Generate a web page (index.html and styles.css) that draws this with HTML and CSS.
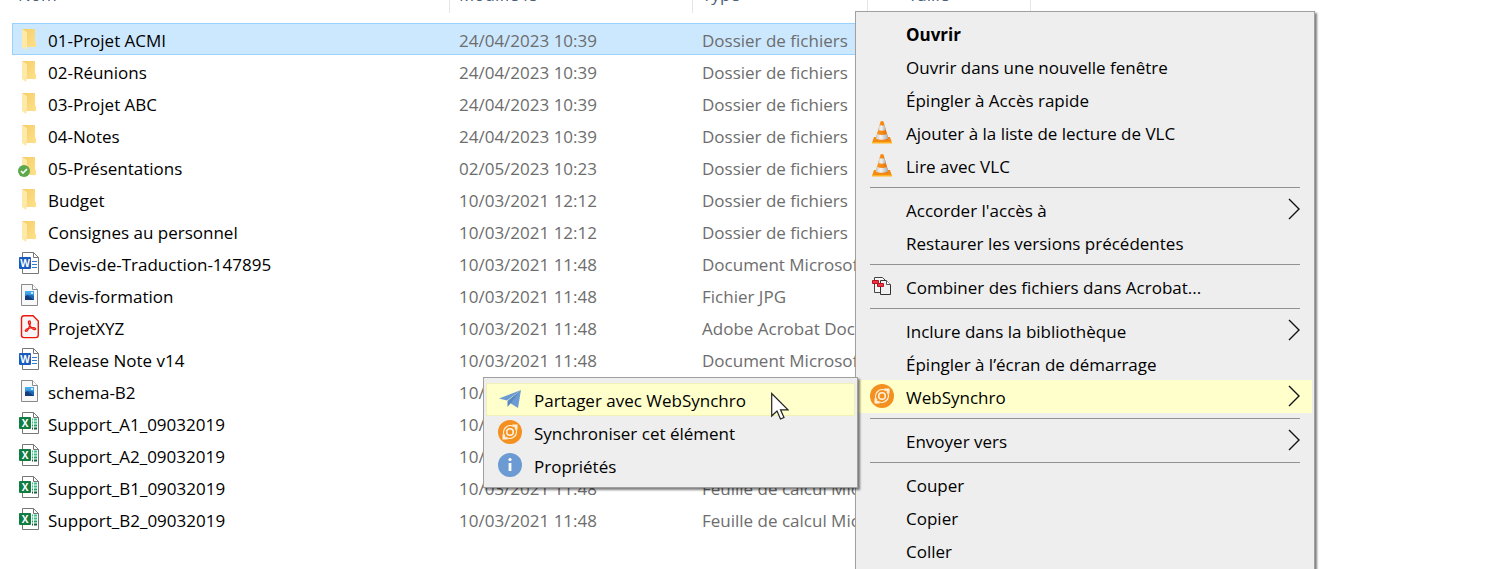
FILE: index.html
```
<!DOCTYPE html>
<html lang="fr">
<head>
  <meta charset="UTF-8" />
  <meta name="viewport" content="width=device-width, initial-scale=1.0"/>
  <title>WebSynchro - Menu contextuel</title>
  <link rel="stylesheet" href="styles.css">
</head>
<body>
  <!-- Icons -->
  <svg class="sprite" aria-hidden="true">
    <defs>
      <linearGradient id="gold" x1="0" y1="0" x2="1" y2="1">
        <stop offset="0" stop-color="#f3cd68"/>
        <stop offset="1" stop-color="#ffe08a"/>
      </linearGradient>
      <linearGradient id="sky" x1="0" y1="0" x2="0" y2="1">
        <stop offset="0" stop-color="#4db2f5"/>
        <stop offset="1" stop-color="#1668bd"/>
      </linearGradient>
      <linearGradient id="cone" x1="0" y1="0" x2="1" y2="0">
        <stop offset="0" stop-color="#f79a2c"/>
        <stop offset="0.5" stop-color="#f78a14"/>
        <stop offset="1" stop-color="#d9690a"/>
      </linearGradient>
      <linearGradient id="band" x1="0" y1="0" x2="1" y2="0">
        <stop offset="0" stop-color="#c9c9c9"/>
        <stop offset="0.4" stop-color="#f4f4f4"/>
        <stop offset="1" stop-color="#a9acb0"/>
      </linearGradient>
    </defs>
    <symbol id="folder" viewBox="0 0 24 24">
      <path d="M4 2h13v12l1 2v4H8z" fill="url(#gold)"/>
      <path d="M4 2l5 3v15l-1 3-4-3z" fill="#ffe9a9"/>
    </symbol>
    <symbol id="folder-ok" viewBox="0 0 24 24">
      <use href="#folder"/>
      <circle cx="6" cy="16" r="6" fill="#5da74c"/>
      <path d="M3 16l2 2 4-4" fill="none" stroke="#fff" stroke-width="1.6"/>
    </symbol>
    <symbol id="word" viewBox="0 0 24 24">
      <path d="M4.500 1.500h11l5 5v16h-16z" fill="#fff" stroke="#777"/>
      <path d="M15.500 1.500v5h5" fill="none" stroke="#777"/>
      <path d="M14 10.500h5M14 13.500h5M14 16.500h5" stroke="#2f7fd6"/>
      <rect x="1" y="6" width="12" height="12" rx="1" fill="#185abd"/>
      <text x="7" y="16" class="badge-letter">W</text>
    </symbol>
    <symbol id="excel" viewBox="0 0 24 24">
      <path d="M4.500 1.500h11l5 5v16h-16z" fill="#fff" stroke="#777"/>
      <path d="M15.500 1.500v5h5" fill="none" stroke="#777"/>
      <path d="M14 8.500h1M16 8.500h3M14 11.500h1M16 11.500h3" stroke="#33c481" stroke-width="2"/>
      <path d="M14 14.500h1M16 14.500h3" stroke="#21a366" stroke-width="2"/>
      <path d="M14 17.500h1M16 17.500h3" stroke="#185c37" stroke-width="2"/>
      <rect x="1" y="6" width="12" height="12" rx="1" fill="#107c41"/>
      <text x="7" y="16" class="badge-letter">X</text>
    </symbol>
    <symbol id="image" viewBox="0 0 24 24">
      <path d="M3.500 1.500h11l5 5v16h-16z" fill="#f8f8f8" stroke="#8a8a8a"/>
      <path d="M14.500 1.500v5h5" fill="#fff" stroke="#8a8a8a"/>
      <rect x="7" y="8" width="9" height="9" fill="url(#sky)"/>
      <path d="M7 13l3-1 6 5H7z" fill="#123c7a"/>
      <path d="M10 13l3-1 3 1v3z" fill="#1f62ae"/>
      <circle cx="14" cy="10" r="1" fill="#fff"/>
    </symbol>
    <symbol id="pdf" viewBox="0 0 24 24">
      <path d="M6 .7h9l5.300 5.300v14a2.600 2.600 0 0 1-2.600 2.600H6A2.600 2.600 0 0 1 3.500 20V3.300A2.600 2.600 0 0 1 6 .7z" fill="#f6f4f4" stroke="#f0160c" stroke-width="1.400"/>
      <path d="M11.500 6c-1.700 0-1.300 2.300.3 4.600 1.300 2 3.200 4 4.900 4 1.700-.2 1-2-1.700-2-2.800 0-7 1.200-7.600 2.800-.3 1.400 1.500 1.400 2.600-.7C11.300 12 13.700 6 11.500 6z" fill="none" stroke="#f0160c" stroke-width="1.300"/>
    </symbol>
    <symbol id="vlc" viewBox="0 0 24 24">
      <path d="M4 17h16l2 6H2z" fill="#f58a12"/>
      <path d="M2 22h20v1.500H2z" fill="#ffb41f"/>
      <path d="M10.500 1.500q1.500-1 3 0L18.500 19q-6.500 3-13 0z" fill="url(#cone)"/>
      <path d="M9.500 5q2.500 1 5 0l1.400 5q-3.900 1.500-7.800 0z" fill="url(#band)"/>
      <path d="M7 14q5 2 10 0l1.200 4.500q-6.200 2.500-12.400 0z" fill="url(#band)"/>
    </symbol>
    <symbol id="combine" viewBox="0 0 24 24">
      <path d="M4.500 3.500h8l3 3v12h-11z" fill="#f6f6f6" stroke="#444"/>
      <path d="M10.500 6.500h6l4 4v10h-10z" fill="#f0f0f0" stroke="#333"/>
      <path d="M16.500 6.500v4h4" fill="#fff" stroke="#555"/>
      <path d="M2.500 6.500h6v3h-6zM7.500 9.500h6v3h-6z" fill="#ee3544" stroke="#b5121f"/>
    </symbol>
    <symbol id="synchro" viewBox="0 0 24 24">
      <circle cx="12" cy="12" r="12" fill="#f39020"/>
      <g fill="none" stroke="#fff2dc" stroke-width="1.300">
        <circle cx="12" cy="12" r="3.300" stroke-width="1.600"/>
        <path d="M7 16.500A6.700 6.700 0 0 1 16 6.800M17 7.500A6.700 6.700 0 0 1 8 17.200"/>
      </g>
      <path d="M14 4.500l5.500 0 0 5.500zM10 19.500l-5.500 0 0-5.500z" fill="#fff2dc"/>
    </symbol>
    <symbol id="plane" viewBox="0 0 24 24">
      <path d="M1 11.500L23 3 9 13.500z" fill="#6b9bd2"/>
      <path d="M23 3l-3 18-8-5z" fill="#6b9bd2"/>
      <path d="M23 3L9.500 14v6l3-3.500z" fill="#5687c2"/>
    </symbol>
    <symbol id="info" viewBox="0 0 24 24">
      <circle cx="12" cy="12" r="12" fill="#6b9bd2"/>
      <circle cx="12" cy="6.500" r="1.600" fill="#fff"/>
      <path d="M12 10v8" stroke="#fff" stroke-width="2.800"/>
    </symbol>
    <symbol id="chevron" viewBox="0 0 12 22">
      <path d="M1 1l10 10L1 21" fill="none" stroke="#111" stroke-width="1.400"/>
    </symbol>
  </svg>

  <main class="explorer">
    <table class="files">
      <colgroup>
        <col class="col-name">
        <col class="col-date">
        <col class="col-type">
        <col class="col-size">
      </colgroup>
      <thead>
        <tr>
          <th scope="col"><span>Nom</span></th>
          <th scope="col"><span>Modifié le</span></th>
          <th scope="col"><span>Type</span></th>
          <th scope="col" class="size"><span>Taille</span></th>
        </tr>
      </thead>
      <tbody>
        <tr class="selected"><td><div class="name"><svg class="icon"><use href="#folder"/></svg>01-Projet ACMI</div></td><td>24/04/2023 10:39</td><td>Dossier de fichiers</td><td></td></tr>
        <tr><td><div class="name"><svg class="icon"><use href="#folder"/></svg>02-Réunions</div></td><td>24/04/2023 10:39</td><td>Dossier de fichiers</td><td></td></tr>
        <tr><td><div class="name"><svg class="icon"><use href="#folder"/></svg>03-Projet ABC</div></td><td>24/04/2023 10:39</td><td>Dossier de fichiers</td><td></td></tr>
        <tr><td><div class="name"><svg class="icon"><use href="#folder"/></svg>04-Notes</div></td><td>24/04/2023 10:39</td><td>Dossier de fichiers</td><td></td></tr>
        <tr><td><div class="name"><svg class="icon"><use href="#folder-ok"/></svg>05-Présentations</div></td><td>02/05/2023 10:23</td><td>Dossier de fichiers</td><td></td></tr>
        <tr><td><div class="name"><svg class="icon"><use href="#folder"/></svg>Budget</div></td><td>10/03/2021 12:12</td><td>Dossier de fichiers</td><td></td></tr>
        <tr><td><div class="name"><svg class="icon"><use href="#folder"/></svg>Consignes au personnel</div></td><td>10/03/2021 12:12</td><td>Dossier de fichiers</td><td></td></tr>
        <tr><td><div class="name"><svg class="icon"><use href="#word"/></svg>Devis-de-Traduction-147895</div></td><td>10/03/2021 11:48</td><td>Document Microsoft Word</td><td></td></tr>
        <tr><td><div class="name"><svg class="icon"><use href="#image"/></svg>devis-formation</div></td><td>10/03/2021 11:48</td><td>Fichier JPG</td><td></td></tr>
        <tr><td><div class="name"><svg class="icon"><use href="#pdf"/></svg>ProjetXYZ</div></td><td>10/03/2021 11:48</td><td>Adobe Acrobat Document</td><td></td></tr>
        <tr><td><div class="name"><svg class="icon"><use href="#word"/></svg>Release Note v14</div></td><td>10/03/2021 11:48</td><td>Document Microsoft Word</td><td></td></tr>
        <tr><td><div class="name"><svg class="icon"><use href="#image"/></svg>schema-B2</div></td><td>10/03/2021 11:48</td><td>Fichier PNG</td><td></td></tr>
        <tr><td><div class="name"><svg class="icon"><use href="#excel"/></svg>Support_A1_09032019</div></td><td>10/03/2021 11:48</td><td>Feuille de calcul Microsoft Excel</td><td></td></tr>
        <tr><td><div class="name"><svg class="icon"><use href="#excel"/></svg>Support_A2_09032019</div></td><td>10/03/2021 11:48</td><td>Feuille de calcul Microsoft Excel</td><td></td></tr>
        <tr><td><div class="name"><svg class="icon"><use href="#excel"/></svg>Support_B1_09032019</div></td><td>10/03/2021 11:48</td><td>Feuille de calcul Microsoft Excel</td><td></td></tr>
        <tr><td><div class="name"><svg class="icon"><use href="#excel"/></svg>Support_B2_09032019</div></td><td>10/03/2021 11:48</td><td>Feuille de calcul Microsoft Excel</td><td></td></tr>
      </tbody>
    </table>
  </main>

  <!-- Context menu -->
  <ul class="menu context-menu">
    <li><button type="button" class="item default"><span class="slot"></span>Ouvrir</button></li>
    <li><button type="button" class="item"><span class="slot"></span>Ouvrir dans une nouvelle fenêtre</button></li>
    <li><button type="button" class="item"><span class="slot"></span>Épingler à Accès rapide</button></li>
    <li><button type="button" class="item"><svg class="slot"><use href="#vlc"/></svg>Ajouter à la liste de lecture de VLC</button></li>
    <li><button type="button" class="item"><svg class="slot"><use href="#vlc"/></svg>Lire avec VLC</button></li>
    <li class="separator"></li>
    <li><button type="button" class="item"><span class="slot"></span>Accorder l'accès à<svg class="arrow"><use href="#chevron"/></svg></button></li>
    <li><button type="button" class="item"><span class="slot"></span>Restaurer les versions précédentes</button></li>
    <li class="separator"></li>
    <li><button type="button" class="item"><svg class="slot"><use href="#combine"/></svg>Combiner des fichiers dans Acrobat...</button></li>
    <li class="separator"></li>
    <li><button type="button" class="item"><span class="slot"></span>Inclure dans la bibliothèque<svg class="arrow"><use href="#chevron"/></svg></button></li>
    <li><button type="button" class="item"><span class="slot"></span>Épingler à l’écran de démarrage</button></li>
    <li class="has-submenu">
      <button type="button" class="item active"><svg class="slot"><use href="#synchro"/></svg>WebSynchro<svg class="arrow"><use href="#chevron"/></svg></button>
      <ul class="menu submenu">
        <li><button type="button" class="item active"><svg class="slot"><use href="#plane"/></svg>Partager avec WebSynchro</button></li>
        <li><button type="button" class="item"><svg class="slot"><use href="#synchro"/></svg>Synchroniser cet élément</button></li>
        <li><button type="button" class="item"><svg class="slot"><use href="#info"/></svg>Propriétés</button></li>
      </ul>
    </li>
    <li class="separator"></li>
    <li><button type="button" class="item"><span class="slot"></span>Envoyer vers<svg class="arrow"><use href="#chevron"/></svg></button></li>
    <li class="separator"></li>
    <li><button type="button" class="item"><span class="slot"></span>Couper</button></li>
    <li><button type="button" class="item"><span class="slot"></span>Copier</button></li>
    <li><button type="button" class="item"><span class="slot"></span>Coller</button></li>
  </ul>

  <svg class="cursor" viewBox="0 0 18 28" aria-hidden="true">
    <path d="M.7 1.500v22.500l5.300-5 3.500 8 3.500-1.500-3.500-7.700h7.500z" fill="#fff" stroke="#222" stroke-width="1.200"/>
  </svg>
</body>
</html>
```
FILE: styles.css
```
* {
  margin: 0;
  padding: 0;
  box-sizing: border-box;
}

body {
  font-family: 'Segoe UI', 'Open Sans', 'Noto Sans', sans-serif;
  font-size: 17px;
  line-height: 24px;
  color: #000;
  background: #fff;
  min-height: 100vh;
  overflow: hidden;
}

.sprite {
  position: absolute;
  width: 0;
  height: 0;
}

.badge-letter {
  font-size: 10px;
  font-weight: 700;
  fill: #fff;
  text-anchor: middle;
}

/* File list, scrolled a little past its header */
.explorer {
  margin-top: -21px;
  padding-left: 12px;
}

.files {
  table-layout: fixed;
  width: 1019px;
  border-collapse: separate;
  border-spacing: 0;
}

.col-name {
  width: 438px;
}

.col-date {
  width: 243px;
}

.col-type {
  width: 175px;
}

.col-size {
  width: 163px;
}

.files th {
  padding-bottom: 10px;
  text-align: left;
  font-weight: 400;
  color: #4c607a;
}

.files th span {
  display: block;
  height: 34px;
  padding: 4px 9px 0;
  border-right: 1px solid #e5e5e5;
}

.files th:first-child span {
  padding-left: 6px;
}

.files th.size span {
  padding-left: 40px;
}

.files td {
  height: 32px;
  padding: 4px 9px 0;
  color: #6d6d6d;
  white-space: nowrap;
  overflow: hidden;
}

.files td:first-child {
  padding: 0 6px;
  color: #000;
}

.name {
  display: flex;
  align-items: center;
  gap: 6px;
  padding-top: 4px;
}

.icon {
  width: 24px;
  height: 24px;
  flex: none;
  margin-bottom: 4px;
}

.selected td {
  background: #cce8ff;
  box-shadow: inset 0 1px #99d1ff, inset 0 -1px #99d1ff;
}

.selected td:first-child {
  box-shadow: inset 0 1px #99d1ff, inset 0 -1px #99d1ff, inset 1px 0 #99d1ff;
}

/* Menus */
.menu {
  position: absolute;
  padding: 5px 2px;
  list-style: none;
  background: #eee;
  border: 1px solid #a0a0a0;
  box-shadow: 2px 2px 2px rgba(0, 0, 0, 0.5);
}

.context-menu {
  top: 11px;
  left: 855px;
  width: 460px;
}

.has-submenu {
  position: relative;
}

.submenu {
  top: -3px;
  right: 100%;
  width: 375px;
}

.item {
  display: flex;
  align-items: center;
  gap: 12px;
  width: 100%;
  height: 33px;
  padding: 2px 12px 0;
  border: none;
  background: none;
  font: inherit;
  color: #000;
  text-align: left;
  white-space: nowrap;
}

.item.default {
  font-weight: 700;
}

.item:hover,
.item.active {
  background: #ffffcb;
}

.submenu .item.active {
  box-shadow: inset 0 0 0 1px #f0f0b8;
}

.slot {
  width: 24px;
  height: 24px;
  flex: none;
  margin-bottom: 4px;
}

.arrow {
  width: 12px;
  height: 22px;
  margin-left: auto;
  margin-bottom: 4px;
}

.separator {
  height: 11px;
  margin: 0 12px;
  padding-top: 5px;
}

.separator::before {
  content: '';
  display: block;
  height: 1px;
  background: #919191;
}

.cursor {
  position: absolute;
  top: 392px;
  left: 771px;
  width: 18px;
  height: 28px;
}
```
